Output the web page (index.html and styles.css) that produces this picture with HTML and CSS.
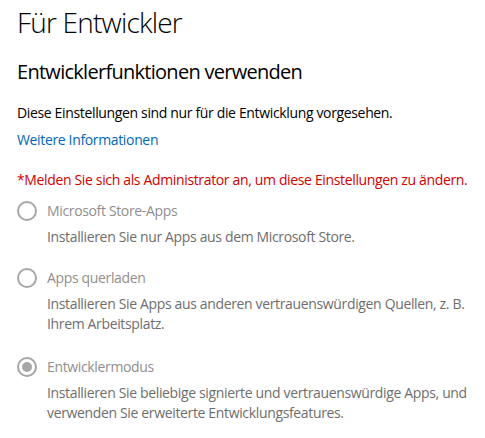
FILE: index.html
```html
<!DOCTYPE html>
<html lang="de">
<head>
<meta charset="utf-8">
<title>Für Entwickler</title>
<link rel="stylesheet" href="styles.css">
</head>
<body>
<main class="page">
  <h1 class="title">Für Entwickler</h1>
  <h2 class="subtitle">Entwicklerfunktionen verwenden</h2>
  <p class="text">Diese Einstellungen sind nur für die Entwicklung vorgesehen.</p>
  <a class="link" href="#">Weitere Informationen</a>
  <p class="error">*Melden Sie sich als Administrator an, um diese Einstellungen zu ändern.</p>

  <div class="option opt1">
    <div class="radio-row"><span class="radio"></span><span class="label">Microsoft Store-Apps</span></div>
    <p class="desc">Installieren Sie nur Apps aus dem Microsoft Store.</p>
  </div>
  <div class="option opt2">
    <div class="radio-row"><span class="radio"></span><span class="label">Apps querladen</span></div>
    <p class="desc">Installieren Sie Apps aus anderen vertrauenswürdigen Quellen, z. B.<br>Ihrem Arbeitsplatz.</p>
  </div>
  <div class="option opt3">
    <div class="radio-row"><span class="radio checked"></span><span class="label">Entwicklermodus</span></div>
    <p class="desc">Installieren Sie beliebige signierte und vertrauenswürdige Apps, und<br>verwenden Sie erweiterte Entwicklungsfeatures.</p>
  </div>
</main>
</body>
</html>
```

FILE: styles.css
```css
html, body {
  margin: 0;
  padding: 0;
  background: #ffffff;
}

.page {
  padding: 0 17px;
  font-family: "Segoe UI", "Open Sans", "Noto Sans", sans-serif;
  font-size: 14px;
  letter-spacing: -0.35px;
  color: #000000;
  display: flex;
  flex-direction: column;
  align-items: flex-start;
  white-space: nowrap;
}

.title {
  margin: 0;
  font-size: 28px;
  font-weight: 300;
  line-height: 44px;
  letter-spacing: -0.8px;
}

.subtitle {
  margin: 14px 0 0;
  font-size: 20px;
  font-weight: 400;
  line-height: 28px;
  letter-spacing: -0.72px;
}

.text {
  margin: 17px 0 0;
  line-height: 20px;
}

.link {
  margin-top: 7px;
  line-height: 20px;
  color: #0067b8;
  text-decoration: none;
}

.error {
  margin: 20px 0 0;
  line-height: 20px;
  color: #d00000;
}

.option {
  display: flex;
  flex-direction: column;
}

.opt1 { margin-top: 11px; }
.opt2 { margin-top: 21px; }
.opt3 { margin-top: 23px; }

.radio-row {
  display: flex;
  align-items: center;
  gap: 10px;
  height: 20px;
}

.radio {
  box-sizing: border-box;
  width: 20px;
  height: 20px;
  border: 2px solid #a6a6a6;
  border-radius: 50%;
  display: flex;
  align-items: center;
  justify-content: center;
}

.radio.checked::after {
  content: "";
  width: 10px;
  height: 10px;
  border-radius: 50%;
  background: #a6a6a6;
}

.label {
  color: #8f8f8f;
  line-height: 20px;
}

.desc {
  margin: 6px 0 0 30px;
  line-height: 20px;
  color: #6e6e6e;
}
```
